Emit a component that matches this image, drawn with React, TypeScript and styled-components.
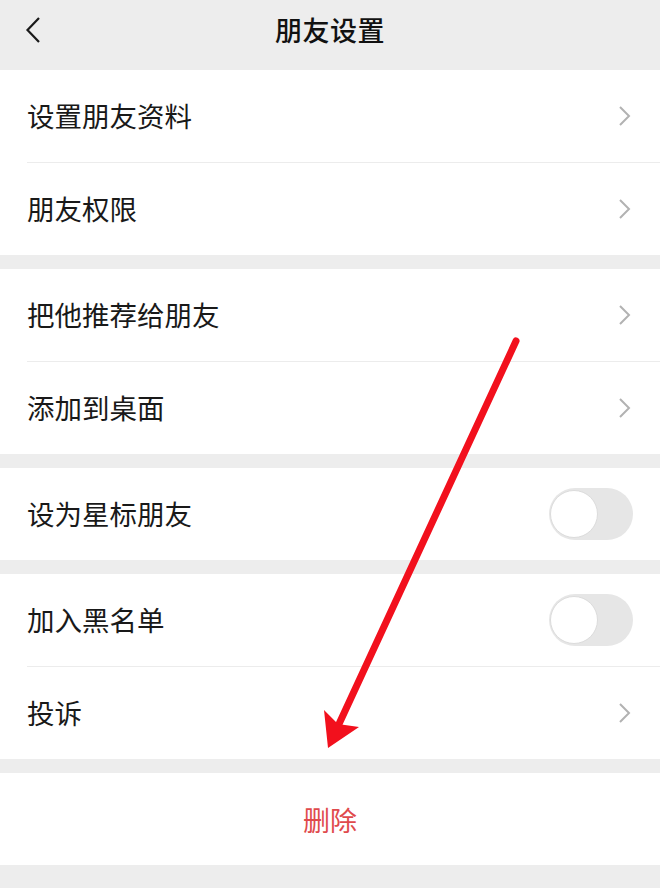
import React from 'react';
import styled, { createGlobalStyle } from 'styled-components';

const GlobalStyle = createGlobalStyle`
  html, body {
    margin: 0;
    padding: 0;
    background: #ededed;
  }
  body {
    font-family: "Noto Sans CJK SC", "Noto Sans", sans-serif;
    color: #191919;
  }
`;

const Page = styled.div`
  position: relative;
  width: 660px;
  height: 888px;
  overflow: hidden;
  background: #ededed;
`;

const Header = styled.header`
  position: relative;
  height: 70px;
  padding-bottom: 12px;
  box-sizing: border-box;
  display: flex;
  align-items: center;
  justify-content: center;
`;

const BackButton = styled.button`
  position: absolute;
  left: 25px;
  top: 16px;
  width: 16px;
  height: 28px;
  padding: 0;
  border: none;
  background: none;
  display: flex;
`;

const Title = styled.h1`
  margin: 0;
  font-size: 27px;
  font-weight: 500;
  letter-spacing: 0.5px;
  color: #111;
`;

const Group = styled.section`
  background: #fff;
  margin-bottom: 14px;
`;

const Row = styled.div<{ $divider?: boolean }>`
  height: 92px;
  margin-left: 27px;
  padding-right: 27px;
  display: flex;
  align-items: center;
  justify-content: space-between;
  border-top: ${(p) => (p.$divider ? '1px solid #ececec' : 'none')};
`;

const Label = styled.span`
  font-size: 27.5px;
  line-height: 1;
  color: #191919;
`;

const Arrow = styled.svg`
  width: 13px;
  height: 22px;
  margin-right: 2px;
`;

const Track = styled.div<{ $on?: boolean }>`
  position: relative;
  width: 84px;
  height: 52px;
  border-radius: 26px;
  background: ${(p) => (p.$on ? '#07c160' : '#e6e6e6')};
`;

const Knob = styled.div`
  position: absolute;
  left: 1px;
  top: 2px;
  width: 46px;
  height: 46px;
  border-radius: 50%;
  background: #fff;
  border: 1px solid #dcdcdc;
`;

const DangerRow = styled.div`
  height: 92px;
  display: flex;
  align-items: center;
  justify-content: center;
  background: #fff;
  font-size: 27px;
  color: #e04a4c;
`;

const Annotation = styled.svg`
  position: absolute;
  left: 0;
  top: 0;
  width: 660px;
  height: 888px;
  pointer-events: none;
`;

const Chevron = () => (
  <Arrow viewBox="0 0 13 22">
    <path d="M2 2 L11 11 L2 20" fill="none" stroke="#b2b2b2" strokeWidth="2" />
  </Arrow>
);

const Switch = ({ on }: { on?: boolean }) => (
  <Track $on={on}>
    <Knob />
  </Track>
);

type Item = { label: string; kind: 'link' | 'switch' };

const groups: Item[][] = [
  [
    { label: '设置朋友资料', kind: 'link' },
    { label: '朋友权限', kind: 'link' },
  ],
  [
    { label: '把他推荐给朋友', kind: 'link' },
    { label: '添加到桌面', kind: 'link' },
  ],
  [{ label: '设为星标朋友', kind: 'switch' }],
  [
    { label: '加入黑名单', kind: 'switch' },
    { label: '投诉', kind: 'link' },
  ],
];

const App = (): React.ReactElement => {
  return (
    <Page>
      <GlobalStyle />
      <Header>
        <BackButton aria-label="返回">
          <svg width="16" height="28" viewBox="0 0 16 28">
            <path d="M14 2 L2.5 14 L14 26" fill="none" stroke="#1a1a1a" strokeWidth="2.2" />
          </svg>
        </BackButton>
        <Title>朋友设置</Title>
      </Header>
      {groups.map((items, gi) => (
        <Group key={gi}>
          {items.map((item, i) => (
            <Row key={item.label} $divider={i > 0}>
              <Label>{item.label}</Label>
              {item.kind === 'link' ? <Chevron /> : <Switch />}
            </Row>
          ))}
        </Group>
      ))}
      <DangerRow>删除</DangerRow>
      <Annotation viewBox="0 0 660 888">
        <line x1="516" y1="341" x2="339" y2="724" stroke="#f2101d" strokeWidth="7" strokeLinecap="round" />
        <polygon points="328,748 324,710 338,724 359,727" fill="#f2101d" />
      </Annotation>
    </Page>
  );
};

export default App;
